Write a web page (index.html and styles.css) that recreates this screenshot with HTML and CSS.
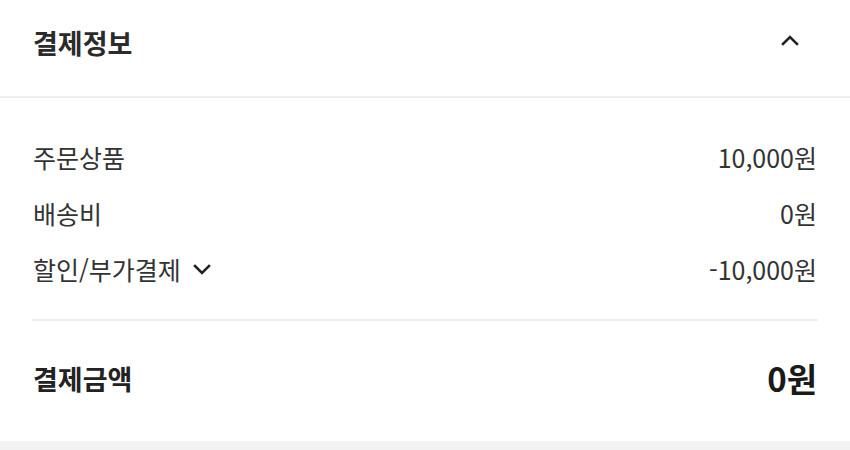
FILE: index.html
```html
<!DOCTYPE html>
<html lang="ko">
<head>
<meta charset="utf-8">
<title>결제정보</title>
<link rel="stylesheet" href="styles.css">
</head>
<body>
<section class="pay">
  <header class="pay-head">
    <h2 class="pay-title">결제정보</h2>
    <button class="toggle" type="button" aria-label="접기">
      <svg width="18" height="12" viewBox="0 0 18 12"><path d="M2 10 L9 3 L16 10" fill="none" stroke="#222" stroke-width="2.6" stroke-linecap="square"/></svg>
    </button>
  </header>
  <div class="pay-body">
    <ul class="lines">
      <li class="line"><span class="label">주문상품</span><span class="amount">10,000원</span></li>
      <li class="line"><span class="label">배송비</span><span class="amount">0원</span></li>
      <li class="line">
        <span class="label">할인/부가결제
          <svg class="caret" width="18" height="12" viewBox="0 0 18 12"><path d="M2 2 L9 9 L16 2" fill="none" stroke="#222" stroke-width="2.6" stroke-linecap="square"/></svg>
        </span>
        <span class="amount">-10,000원</span>
      </li>
    </ul>
    <div class="total">
      <span class="total-label">결제금액</span>
      <span class="total-amount">0원</span>
    </div>
  </div>
</section>
<div class="spacer"></div>
</body>
</html>
```

FILE: styles.css
```css
html, body {
  margin: 0;
  padding: 0;
  background: #fff;
  font-family: "Noto Sans CJK KR", "Noto Sans", sans-serif;
  color: #333;
}

.pay-head {
  height: 96px;
  display: flex;
  align-items: center;
  justify-content: space-between;
  padding: 0 32px 0 33px;
  border-bottom: 2px solid #eeeeee;
}

.pay-title {
  margin: 0;
  font-size: 27px;
  font-weight: 700;
  color: #2b2b2b;
  line-height: 1;
  padding-bottom: 12px;
}

.toggle {
  border: 0;
  background: none;
  padding: 0;
  margin-right: 19px;
  display: flex;
  margin-top: -16px;
}

.pay-body {
  padding: 31px 32px 0;
}

.lines {
  list-style: none;
  margin: 0;
  padding: 0 0 22px;
  border-bottom: 2px solid #eeeeee;
}

.line {
  height: 56px;
  display: flex;
  align-items: center;
  justify-content: space-between;
  font-size: 25px;
  color: #333;
}

.label {
  display: flex;
  align-items: center;
  padding-left: 1px;
}

.caret {
  margin-left: 12px;
  margin-top: 2px;
}

.amount {
  padding-right: 1px;
}

.total {
  height: 118px;
  display: flex;
  align-items: center;
  justify-content: space-between;
  padding-bottom: 4px;
  box-sizing: border-box;
}

.total-label {
  font-size: 27px;
  font-weight: 700;
  color: #222;
  padding-left: 1px;
}

.total-amount {
  font-size: 33px;
  font-weight: 700;
  color: #1a1a1a;
  padding-right: 1px;
}

.spacer {
  height: 20px;
  margin-top: 2px;
  background: #f2f2f2;
}
```
